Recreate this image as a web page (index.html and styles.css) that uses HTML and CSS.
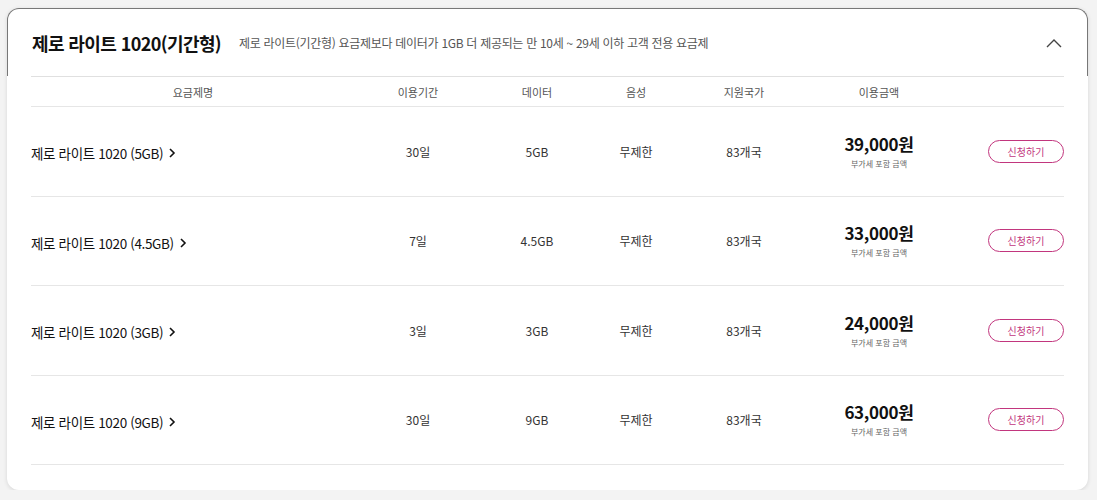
FILE: index.html
```html
<!DOCTYPE html>
<html lang="ko">
<head>
    <meta charset="UTF-8">
    <meta name="viewport" content="width=device-width, initial-scale=1.0">
    <title>제로 라이트 1020(기간형)</title>
    <link rel="stylesheet" href="styles.css">
</head>
<body>
    <div class="plan-card">
        <div class="plan-head">
            <h2 class="plan-title">제로 라이트 1020(기간형)</h2>
            <p class="plan-desc">제로 라이트(기간형) 요금제보다 데이터가 1GB 더 제공되는 만 10세 ~ 29세 이하 고객 전용 요금제</p>
            <button class="toggle-btn" aria-label="접기">
                <svg width="16" height="10" viewBox="0 0 16 10"><path d="M1 9 L8 2 L15 9" fill="none" stroke="#444" stroke-width="1.4"/></svg>
            </button>
        </div>
        <div class="plan-table">
            <div class="row row-head">
                <div class="cell">요금제명</div>
                <div class="cell">이용기간</div>
                <div class="cell">데이터</div>
                <div class="cell">음성</div>
                <div class="cell">지원국가</div>
                <div class="cell">이용금액</div>
                <div class="cell"></div>
            </div>
            <div class="row">
                <div class="cell name"><a href="#">제로 라이트 1020 (5GB)<svg class="arrow" width="8" height="12" viewBox="0 0 8 12"><path d="M2 2 L6 6 L2 10" fill="none" stroke="#111" stroke-width="1.6"/></svg></a></div>
                <div class="cell">30일</div>
                <div class="cell">5GB</div>
                <div class="cell">무제한</div>
                <div class="cell">83개국</div>
                <div class="cell price"><strong>39,000원</strong><span>부가세 포함 금액</span></div>
                <div class="cell action"><button class="apply-btn">신청하기</button></div>
            </div>
            <div class="row">
                <div class="cell name"><a href="#">제로 라이트 1020 (4.5GB)<svg class="arrow" width="8" height="12" viewBox="0 0 8 12"><path d="M2 2 L6 6 L2 10" fill="none" stroke="#111" stroke-width="1.6"/></svg></a></div>
                <div class="cell">7일</div>
                <div class="cell">4.5GB</div>
                <div class="cell">무제한</div>
                <div class="cell">83개국</div>
                <div class="cell price"><strong>33,000원</strong><span>부가세 포함 금액</span></div>
                <div class="cell action"><button class="apply-btn">신청하기</button></div>
            </div>
            <div class="row">
                <div class="cell name"><a href="#">제로 라이트 1020 (3GB)<svg class="arrow" width="8" height="12" viewBox="0 0 8 12"><path d="M2 2 L6 6 L2 10" fill="none" stroke="#111" stroke-width="1.6"/></svg></a></div>
                <div class="cell">3일</div>
                <div class="cell">3GB</div>
                <div class="cell">무제한</div>
                <div class="cell">83개국</div>
                <div class="cell price"><strong>24,000원</strong><span>부가세 포함 금액</span></div>
                <div class="cell action"><button class="apply-btn">신청하기</button></div>
            </div>
            <div class="row">
                <div class="cell name"><a href="#">제로 라이트 1020 (9GB)<svg class="arrow" width="8" height="12" viewBox="0 0 8 12"><path d="M2 2 L6 6 L2 10" fill="none" stroke="#111" stroke-width="1.6"/></svg></a></div>
                <div class="cell">30일</div>
                <div class="cell">9GB</div>
                <div class="cell">무제한</div>
                <div class="cell">83개국</div>
                <div class="cell price"><strong>63,000원</strong><span>부가세 포함 금액</span></div>
                <div class="cell action"><button class="apply-btn">신청하기</button></div>
            </div>
        </div>
    </div>
</body>
</html>
```

FILE: styles.css
```css
* {
    margin: 0;
    padding: 0;
    box-sizing: border-box;
    font-family: 'Noto Sans CJK KR', 'Noto Sans', sans-serif;
}

body {
    background: #f3f3f3;
    padding: 8px 0 0 7px;
    color: #222;
}

.plan-card {
    width: 1081px;
    height: 482px;
    background: #fff;
    border-radius: 12px;
    box-shadow: 0 1px 4px rgba(0, 0, 0, 0.12);
}

.plan-head {
    display: flex;
    align-items: center;
    height: 68px;
    padding: 0 24px;
    border: 1px solid #777;
    border-bottom: none;
    border-radius: 12px 12px 0 0;
}

.plan-title {
    font-size: 18px;
    font-weight: 700;
    color: #111;
    letter-spacing: -0.6px;
}

.plan-desc {
    margin-left: 18px;
    font-size: 12px;
    color: #555;
    letter-spacing: -0.3px;
}

.toggle-btn {
    margin-left: auto;
    margin-right: 1px;
    border: none;
    background: none;
    display: flex;
}

.plan-table {
    margin: 0 24px 0 24px;
}

.row {
    display: grid;
    grid-template-columns: 324px 126px 112px 86px 130px 140px 1fr;
    align-items: center;
    height: 89.5px;
    border-bottom: 1px solid #e6e6e6;
    font-size: 12px;
    color: #333;
}

.row-head {
    height: 31px;
    border-top: 1px solid #e0e0e0;
    font-size: 11px;
    color: #555;
}

.cell {
    text-align: center;
}

.cell.name {
    text-align: left;
    padding-top: 4px;
}

.cell.name a {
    display: inline-flex;
    align-items: center;
    color: #111;
    font-size: 13.5px;
    text-decoration: none;
    letter-spacing: -0.35px;
}

.arrow {
    margin-left: 5px;
}

.price {
    display: flex;
    flex-direction: column;
    align-items: center;
}

.price strong {
    font-size: 17px;
    font-weight: 700;
    color: #111;
    line-height: 22px;
    letter-spacing: -0.3px;
}

.price span {
    font-size: 8px;
    color: #666;
    line-height: 12px;
    margin-top: 3px;
}

.action {
    display: flex;
    justify-content: flex-end;
}

.apply-btn {
    width: 76px;
    height: 23px;
    border: 1px solid #c2367e;
    border-radius: 12px;
    background: #fff;
    color: #c2367e;
    font-size: 10px;
    cursor: pointer;
}
```
